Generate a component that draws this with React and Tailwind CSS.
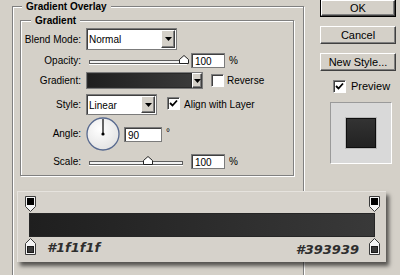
import React from 'react';

const Arrow = () => (
    <svg width="7" height="4" viewBox="0 0 7 4">
        <path d="M0 0 H7 L3.5 4 Z" fill="#000" />
    </svg>
);

const ArrowButton = ({ className = '' }) => (
    <span className={`flex items-center justify-center bg-[#d4d0c8] border border-t-white border-l-white border-r-[#404040] border-b-[#404040] shadow-[inset_-1px_-1px_0_#808080] ${className}`}>
        <Arrow />
    </span>
);

const Select = ({ value, width }) => (
    <div className={`flex h-full ${width} bg-white border border-[#7b7b7b] shadow-[inset_1px_1px_0_#404040]`}>
        <span className="flex-1 pl-[2px] flex items-center text-[10px] pt-[1px]">{value}</span>
        <ArrowButton className="w-[14px] m-[1px]" />
    </div>
);

const Checkbox = ({ checked }) => (
    <span className="flex items-center justify-center w-[13px] h-[13px] bg-white border border-t-[#808080] border-l-[#808080] border-r-white border-b-white shadow-[inset_1px_1px_0_#404040]">
        {checked && (
            <svg width="9" height="9" viewBox="0 0 9 9">
                <path d="M1 4 L3.5 6.5 L8 1.5" fill="none" stroke="#000" strokeWidth="1.8" />
            </svg>
        )}
    </span>
);

const NumberBox = ({ value, width = 'w-[34px]' }) => (
    <span className={`flex items-center ${width} h-[15px] bg-white border border-[#7b7b7b] shadow-[inset_1px_1px_0_#404040] pl-[3px] pt-[1px] text-[10px]`}>
        {value}
    </span>
);

const Slider = ({ width, thumb }) => (
    <div className={`relative ${width} h-[4px] mt-[3px] border border-[#5e5e5e] bg-[#f2f2f2] shadow-[0_1px_0_#fff]`}>
        <svg className="absolute top-[-6px]" style={{ left: thumb }} width="10" height="9" viewBox="0 0 10 9">
            <path d="M5 0.5 L9.5 4.5 V8.5 H0.5 V4.5 Z" fill="#fff" stroke="#222" />
        </svg>
    </div>
);

const Label = ({ children, className = '' }) => (
    <span className={`w-[60px] text-right shrink-0 ${className}`}>{children}</span>
);

const Button = ({ children, primary, className = '' }) => (
    <div className={`w-[76px] h-[18px] flex items-center justify-center text-[11px] ${primary ? 'border border-black' : ''} ${className}`}>
        <div className="w-full h-full flex items-center justify-center border border-t-white border-l-white border-r-[#404040] border-b-[#404040] shadow-[inset_-1px_-1px_0_#808080]">
            {children}
        </div>
    </div>
);

const TopStop = () => (
    <svg width="11" height="16" viewBox="0 0 11 16">
        <path d="M0.5 0.5 H10.5 V10.5 L5.5 15.5 L0.5 10.5 Z" fill="#f4f4f4" stroke="#3a3a3a" />
        <rect x="2" y="2" width="7" height="7" fill="#000" />
    </svg>
);

const BottomStop = () => (
    <svg width="11" height="17" viewBox="0 0 11 17">
        <path d="M5.5 0.5 L10.5 5.5 V16.5 H0.5 V5.5 Z" fill="#f4f4f4" stroke="#3a3a3a" />
        <rect x="2.5" y="8.5" width="6" height="6" fill="#3a3a3a" stroke="#1a1a1a" />
    </svg>
);

export default function App() {
    return (
        <div className="relative w-[400px] h-[275px] overflow-hidden bg-[#d4d0c8] font-['Liberation_Sans',sans-serif] text-[10px] text-black">
            <div className="flex">
                {/* Left: layer style settings */}
                <div className="pl-[12px] w-[304px]">
                    <fieldset className="h-[300px] border border-[#808080] shadow-[inset_1px_1px_0_#fff,1px_1px_0_#fff]">
                        <legend className="ml-[9px] px-[4px] h-[13px] leading-[13px] font-bold bg-[#d4d0c8]">Gradient Overlay</legend>
                        <div className="pl-[7px] pr-[9px]">
                            <fieldset className="mt-[1px] border border-[#808080] shadow-[inset_1px_1px_0_#fff,1px_1px_0_#fff] pb-[6px]">
                                <legend className="ml-[10px] px-[4px] h-[13px] leading-[13px] font-bold bg-[#d4d0c8]">Gradient</legend>

                                <div className="flex items-center h-[22px] mt-[1px]">
                                    <Label>Blend Mode:</Label>
                                    <div className="ml-[5px] h-full">
                                        <Select value="Normal" width="w-[91px]" />
                                    </div>
                                </div>

                                <div className="flex items-center h-[15px] mt-[3px]">
                                    <Label>Opacity:</Label>
                                    <div className="ml-[8px]">
                                        <Slider width="w-[98px]" thumb={89} />
                                    </div>
                                    <span className="ml-[4px]"><NumberBox value="100" /></span>
                                    <span className="ml-[4px]">%</span>
                                </div>

                                <div className="flex items-center h-[17px] mt-[4px]">
                                    <Label>Gradient:</Label>
                                    <div className="ml-[5px] flex h-full w-[117px] border border-[#7b7b7b]">
                                        <span className="flex-1 border border-[#2a2a2a] bg-gradient-to-r from-[#1f1f1f] to-[#3a3a3a]" />
                                        <ArrowButton className="w-[10px]" />
                                    </div>
                                    <span className="ml-[8px]"><Checkbox /></span>
                                    <span className="ml-[3px]">Reverse</span>
                                </div>

                                <div className="flex items-start h-[21px] mt-[5px]">
                                    <Label className="self-center">Style:</Label>
                                    <div className="ml-[5px] h-full">
                                        <Select value="Linear" width="w-[71px]" />
                                    </div>
                                    <div className="ml-[10px] flex items-center">
                                        <Checkbox checked />
                                        <span className="ml-[4px] mt-[3px]">Align with Layer</span>
                                    </div>
                                </div>

                                <div className="flex items-center h-[35px] mt-[1px]">
                                    <Label>Angle:</Label>
                                    <svg className="ml-[5px]" width="34" height="34" viewBox="0 0 34 34">
                                        <defs>
                                            <radialGradient id="dial" cx="0.4" cy="0.35" r="0.7">
                                                <stop offset="0" stopColor="#ffffff" />
                                                <stop offset="1" stopColor="#e2e2e2" />
                                            </radialGradient>
                                        </defs>
                                        <circle cx="17" cy="17" r="16" fill="url(#dial)" stroke="#57698f" strokeWidth="1.3" />
                                        <line x1="17" y1="17" x2="17" y2="2" stroke="#000" strokeWidth="1.2" />
                                        <circle cx="17" cy="17" r="1.6" fill="#000" />
                                    </svg>
                                    <span className="ml-[4px] mt-[2px]"><NumberBox value="90" width="w-[38px]" /></span>
                                    <span className="ml-[4px] self-start mt-[9px]">°</span>
                                </div>

                                <div className="flex items-center h-[15px] mt-[3px]">
                                    <Label>Scale:</Label>
                                    <div className="ml-[8px]">
                                        <Slider width="w-[94px]" thumb={53} />
                                    </div>
                                    <span className="ml-[8px]"><NumberBox value="100" /></span>
                                    <span className="ml-[4px]">%</span>
                                </div>
                            </fieldset>
                        </div>
                    </fieldset>
                </div>

                {/* Right: dialog buttons and preview */}
                <div className="ml-[16px] flex flex-col">
                    <Button primary className="-mt-[1px]">OK</Button>
                    <Button className="mt-[9px]">Cancel</Button>
                    <Button className="mt-[9px]">New Style...</Button>
                    <div className="flex items-center mt-[7px] pl-[13px] text-[11px]">
                        <Checkbox checked />
                        <span className="ml-[5px]">Preview</span>
                    </div>
                    <div className="ml-[10px] mt-[7px] w-[62px] h-[62px] flex items-center justify-center bg-[#d9d9d9] border border-t-[#9a9a9a] border-l-[#9a9a9a] border-r-white border-b-white">
                        <span className="w-[30px] h-[30px] border border-[#0e0e0e] bg-gradient-to-b from-[#333333] to-[#222222] shadow-[0_0_0_1px_#b8b8b8]" />
                    </div>
                </div>
            </div>

            {/* Zoomed gradient editor strip */}
            <div className="absolute left-[17px] top-[191px] w-[369px] h-[71px] bg-[#d6d2cb] border-l border-t border-[#e6e3de] shadow-[3px_4px_4px_rgba(0,0,0,0.6)]">
                <div className="flex justify-between pl-[7px] pr-[6px] pt-[4px] h-[20px]">
                    <TopStop />
                    <TopStop />
                </div>
                <div className="ml-[11px] mt-[1px] w-[346px] h-[24px] border border-[#262626] bg-gradient-to-r from-[#1f1f1f] to-[#393939]" />
                <div className="flex items-start pl-[7px] pr-[6px] mt-[1px]">
                    <BottomStop />
                    <span className="ml-[11px] mt-[2px] font-['DejaVu_Sans',sans-serif] font-bold italic text-[13px] leading-[16px] text-[#2e2e2e]">#1f1f1f</span>
                    <span className="flex-1" />
                    <span className="mr-[10px] mt-[4px] font-['DejaVu_Sans',sans-serif] font-bold italic text-[13px] leading-[16px] text-[#2e2e2e]">#393939</span>
                    <BottomStop />
                </div>
            </div>
        </div>
    );
}
